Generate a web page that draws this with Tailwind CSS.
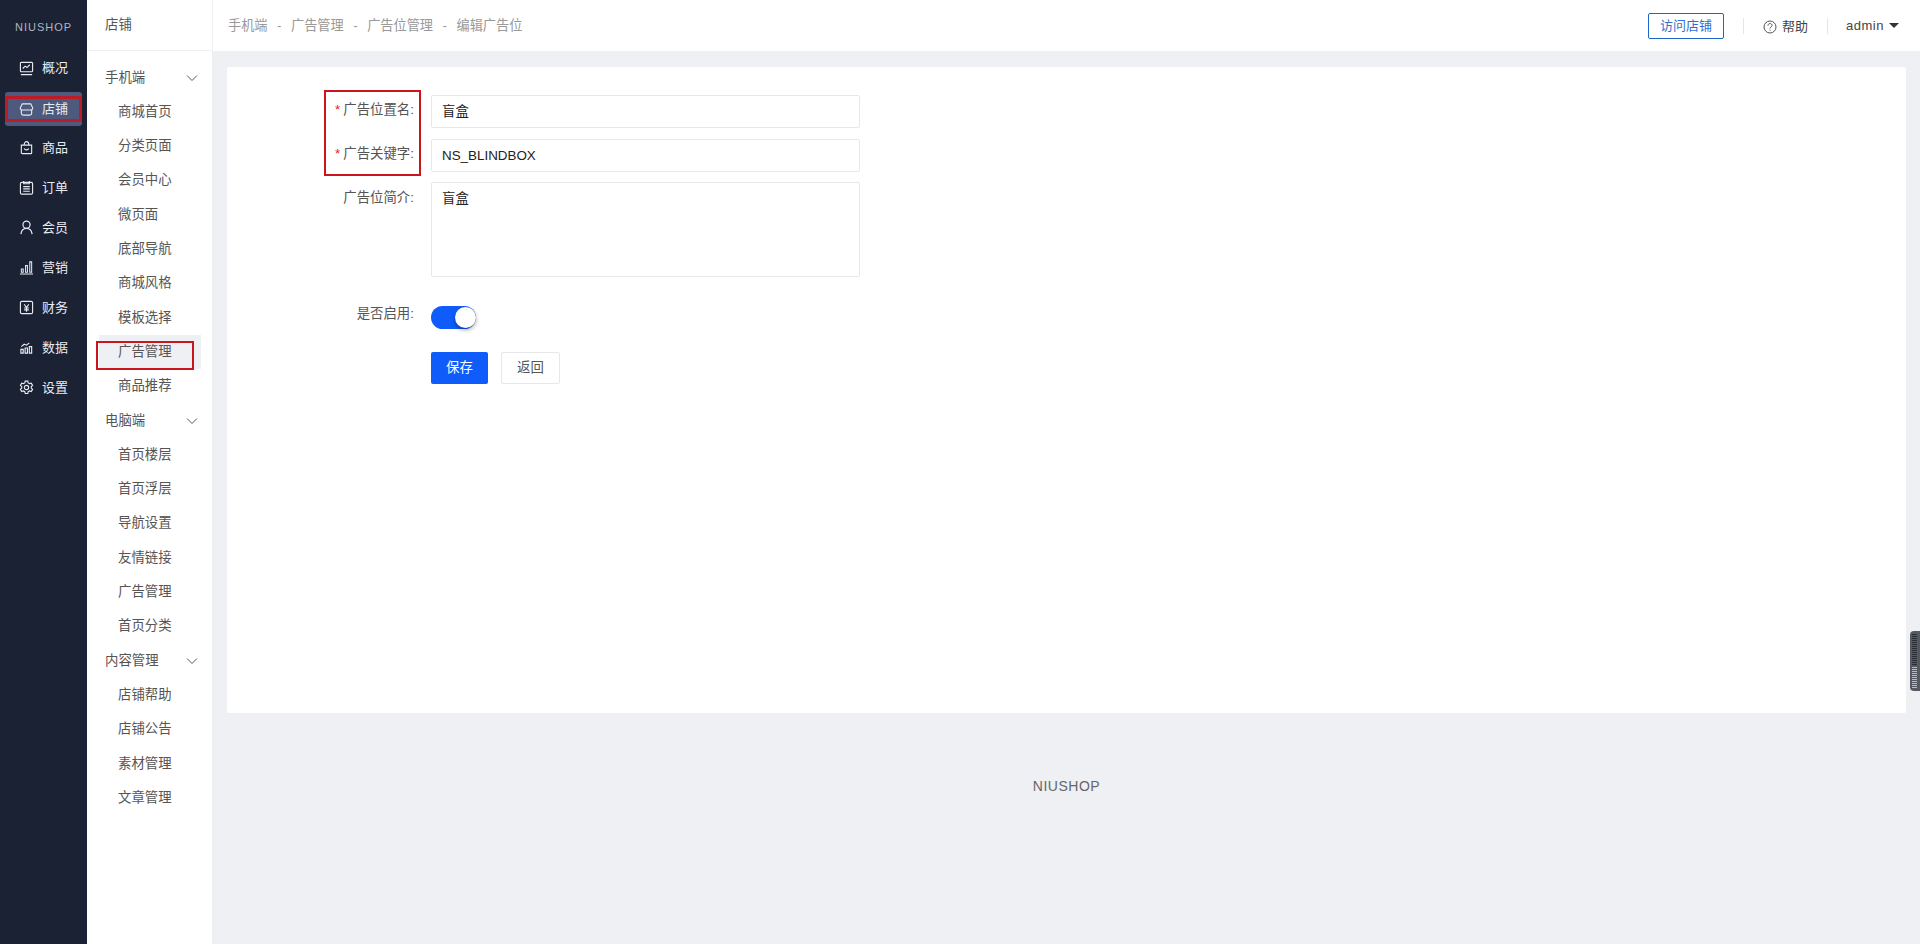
<!DOCTYPE html>
<html lang="zh">
<head>
<meta charset="UTF-8" />
<title>编辑广告位</title>
<script src="https://cdn.jsdelivr.net/npm/@tailwindcss/browser@4"></script>
</head>
<body class="font-['Liberation_Sans','Noto_Sans_CJK_SC',sans-serif] text-[13.4px] text-[#333] bg-[#eff0f4] overflow-hidden">
<div class="flex h-[944px] relative">

  <!-- main nav -->
  <div class="w-[87px] shrink-0 bg-[#1a2233] text-[#e8ebf2] text-[13px] flex flex-col">
    <div class="h-[48px] pt-[7px] flex items-center justify-center text-[11px] tracking-[1px] text-[#b0b5c0]">NIUSHOP</div>
    <div class="flex flex-col px-[5px]">
      <div class="h-[40px] flex items-center justify-center gap-[8px]">
        <svg class="w-[15px] h-[15px]" viewBox="0 0 16 16" fill="none" stroke="currentColor" stroke-width="1.2"><rect x="1.5" y="1.5" width="13" height="10" rx="1"/><path d="M4 8l2.500-2.500 2 1.500 3-3M2 14.500h12"/></svg>
        <span>概况</span>
      </div>
      <div class="h-[34px] mt-[4px] mb-[2px] flex items-center justify-center gap-[8px] bg-[#4e5a7d] rounded-[3px]">
        <svg class="w-[15px] h-[15px]" viewBox="0 0 16 16" fill="none" stroke="currentColor" stroke-width="1.2"><path d="M3.500 2h9l2.200 4.500a2 2 0 01-2 2H3.300a2 2 0 01-2-2zM2.500 8.500v3.500a2 2 0 002 2h7a2 2 0 002-2V8.500"/></svg>
        <span>店铺</span>
      </div>
      <div class="h-[39.9px] flex items-center justify-center gap-[8px]">
        <svg class="w-[15px] h-[15px]" viewBox="0 0 16 16" fill="none" stroke="currentColor" stroke-width="1.2"><path d="M2.500 5.500h11v8a1 1 0 01-1 1h-9a1 1 0 01-1-1zM5.500 5.500c0-5 5-5 5 0M5.500 9c1 2 4 2 5 0"/></svg>
        <span>商品</span>
      </div>
      <div class="h-[39.9px] flex items-center justify-center gap-[8px]">
        <svg class="w-[15px] h-[15px]" viewBox="0 0 16 16" fill="none" stroke="currentColor" stroke-width="1.2"><rect x="1.500" y="2.500" width="13" height="12.500" rx="1.500"/><path d="M5 1v3h6V1M4.500 7h7M4.500 9.500h7M4.500 12h7"/></svg>
        <span>订单</span>
      </div>
      <div class="h-[39.9px] flex items-center justify-center gap-[8px]">
        <svg class="w-[15px] h-[15px]" viewBox="0 0 16 16" fill="none" stroke="currentColor" stroke-width="1.300"><circle cx="8" cy="5" r="3.800"/><path d="M2 15c.6-4 3-6 6-6s5.400 2 6 6"/></svg>
        <span>会员</span>
      </div>
      <div class="h-[39.9px] flex items-center justify-center gap-[8px]">
        <svg class="w-[15px] h-[15px]" viewBox="0 0 16 16" fill="none" stroke="currentColor" stroke-width="1.100"><path d="M1 15h14M2.500 9.500h2v3.500h-2zM7 6h2v7H7zM11.500 2h2v11h-2z"/></svg>
        <span>营销</span>
      </div>
      <div class="h-[39.9px] flex items-center justify-center gap-[8px]">
        <svg class="w-[15px] h-[15px]" viewBox="0 0 16 16" fill="none" stroke="currentColor" stroke-width="1.200"><rect x="1.500" y="1.500" width="13" height="13" rx="1.500"/><path d="M5.500 4.500L8 8l2.500-3.500M5.500 8.500h5M5.500 10.500h5M8 8v4.500"/></svg>
        <span>财务</span>
      </div>
      <div class="h-[39.9px] flex items-center justify-center gap-[8px]">
        <svg class="w-[15px] h-[15px]" viewBox="0 0 16 16" fill="none" stroke="currentColor" stroke-width="1.200"><path d="M2 14v-4h2.500v4zM6.500 14V8.500H9V14zM11 14V7h2.500v7zM2.500 7l3-2.500 2.500 1 3-2.500"/></svg>
        <span>数据</span>
      </div>
      <div class="h-[39.9px] flex items-center justify-center gap-[8px]">
        <svg class="w-[15px] h-[15px]" viewBox="0 0 16 16" fill="none" stroke="currentColor" stroke-width="1.200"><circle cx="8" cy="8" r="2.300"/><path d="M6.600 1.200h2.800l.4 1.900 1.400.8 1.900-.6 1.400 2.400-1.400 1.300v1.600l1.400 1.300-1.400 2.400-1.900-.6-1.400.8-.4 1.900H6.600l-.4-1.900-1.400-.8-1.900.6-1.400-2.400 1.400-1.300V7L1.500 5.700l1.400-2.400 1.900.6 1.400-.8z"/></svg>
        <span>设置</span>
      </div>
    </div>
  </div>

  <!-- sub nav -->
  <div class="w-[126px] shrink-0 bg-white border-r border-[#eeeff3] flex flex-col text-[#555]">
    <div class="h-[51px] pl-[18px] flex items-center border-b border-[#eeeff3]">店铺</div>
    <div class="flex flex-col pt-[9.500px]">
      <div class="h-[34.300px] pl-[18px] pr-[14px] flex items-center justify-between">手机端<svg class="w-[12px] h-[12px]" viewBox="0 0 12 12" fill="none" stroke="#555" stroke-width="1"><path d="M1 3.500l5 5 5-5"/></svg></div>
      <div class="h-[34.300px] pl-[31px] flex items-center">商城首页</div>
      <div class="h-[34.300px] pl-[31px] flex items-center">分类页面</div>
      <div class="h-[34.300px] pl-[31px] flex items-center">会员中心</div>
      <div class="h-[34.300px] pl-[31px] flex items-center">微页面</div>
      <div class="h-[34.300px] pl-[31px] flex items-center">底部导航</div>
      <div class="h-[34.300px] pl-[31px] flex items-center">商城风格</div>
      <div class="h-[34.300px] pl-[31px] flex items-center">模板选择</div>
      <div class="h-[34.300px] pl-[19px] ml-[12px] w-[102px] flex items-center bg-[#eff0f4]">广告管理</div>
      <div class="h-[34.300px] pl-[31px] flex items-center">商品推荐</div>
      <div class="h-[34.300px] pl-[18px] pr-[14px] flex items-center justify-between">电脑端<svg class="w-[12px] h-[12px]" viewBox="0 0 12 12" fill="none" stroke="#555" stroke-width="1"><path d="M1 3.500l5 5 5-5"/></svg></div>
      <div class="h-[34.300px] pl-[31px] flex items-center">首页楼层</div>
      <div class="h-[34.300px] pl-[31px] flex items-center">首页浮层</div>
      <div class="h-[34.300px] pl-[31px] flex items-center">导航设置</div>
      <div class="h-[34.300px] pl-[31px] flex items-center">友情链接</div>
      <div class="h-[34.300px] pl-[31px] flex items-center">广告管理</div>
      <div class="h-[34.300px] pl-[31px] flex items-center">首页分类</div>
      <div class="h-[34.300px] pl-[18px] pr-[14px] flex items-center justify-between">内容管理<svg class="w-[12px] h-[12px]" viewBox="0 0 12 12" fill="none" stroke="#555" stroke-width="1"><path d="M1 3.500l5 5 5-5"/></svg></div>
      <div class="h-[34.300px] pl-[31px] flex items-center">店铺帮助</div>
      <div class="h-[34.300px] pl-[31px] flex items-center">店铺公告</div>
      <div class="h-[34.300px] pl-[31px] flex items-center">素材管理</div>
      <div class="h-[34.300px] pl-[31px] flex items-center">文章管理</div>
    </div>
  </div>

  <!-- right side -->
  <div class="flex-1 flex flex-col min-w-0">
    <div class="h-[51px] bg-white flex items-center justify-between pl-[15px] pr-[21px]">
      <div class="flex gap-[9.500px] text-[#999] text-[13.200px]">
        <span>手机端</span><span>-</span><span>广告管理</span><span>-</span><span>广告位管理</span><span>-</span><span>编辑广告位</span>
      </div>
      <div class="flex items-center text-[#444] text-[13px]">
        <div class="w-[76px] h-[26px] border border-[#1f66cc] rounded-[2px] text-[#2f6fd0] flex items-center justify-center">访问店铺</div>
        <div class="w-px h-[16px] bg-[#e5e5e5] ml-[19px]"></div>
        <svg class="w-[14px] h-[14px] ml-[19px] mt-[2px]" viewBox="0 0 14 14" fill="none" stroke="#555" stroke-width="1"><circle cx="7" cy="7" r="6"/><path d="M5 5.500c0-2.600 4-2.600 4 0 0 1.500-2 1.500-2 3M7 9.700v1"/></svg>
        <span class="ml-[5px] mt-[2px]">帮助</span>
        <div class="w-px h-[16px] bg-[#e5e5e5] ml-[19px]"></div>
        <span class="ml-[18px] tracking-[0.5px]">admin</span>
        <span class="ml-[5px] w-0 h-0 border-x-[5px] border-x-transparent border-t-[5px] border-t-[#333]"></span>
      </div>
    </div>

    <div class="ml-[14px] mr-[14px] mt-[16px] bg-white rounded-[2px] h-[646px] pt-[28px] text-[#555]">
      <div class="flex flex-col gap-[10.500px]">
        <div class="flex items-center h-[33px]">
          <label class="w-[204px] pr-[17px] mb-[3px] text-right"><span class="text-[#e02020] mr-[3px]">*</span>广告位置名:</label>
          <div class="w-[429px] h-[33px] border border-[#e8e8e8] rounded-[2px] flex items-center pl-[10px] pt-[2px] text-[#222]">盲盒</div>
        </div>
        <div class="flex items-center h-[33px]">
          <label class="w-[204px] pr-[17px] mb-[2px] text-right"><span class="text-[#e02020] mr-[3px]">*</span>广告关键字:</label>
          <div class="w-[429px] h-[33px] border border-[#e8e8e8] rounded-[2px] flex items-center pl-[10px] pt-[2px] text-[#222]">NS_BLINDBOX</div>
        </div>
        <div class="flex items-start">
          <label class="w-[204px] pr-[17px] text-right mt-[6px]">广告位简介:</label>
          <div class="w-[429px] h-[95px] border border-[#e8e8e8] rounded-[2px] pl-[10px] pt-[6px] text-[#222]">盲盒</div>
        </div>
      </div>
      <div class="flex items-start mt-[27px]">
        <label class="w-[204px] pr-[17px] text-right">是否启用:</label>
        <div class="w-[45px] h-[23px] mt-[2px] rounded-full bg-[#105cfb] relative">
          <div class="absolute right-0 top-px w-[21px] h-[21px] rounded-full bg-white shadow-[0_2px_4px_rgba(0,0,0,0.35)]"></div>
        </div>
      </div>
      <div class="flex mt-[23px] pl-[204px] gap-[13px]">
        <div class="w-[57px] h-[32px] bg-[#105cfb] text-white rounded-[2px] flex items-center justify-center">保存</div>
        <div class="w-[59px] h-[32px] border border-[#e8e8e8] rounded-[2px] flex items-center justify-center">返回</div>
      </div>
    </div>

    <div class="mt-[63px] flex justify-center text-[14px] tracking-[0.5px] text-[#666]">NIUSHOP</div>
  </div>

  <!-- annotation boxes over the screenshot -->
  <div class="absolute left-[5px] top-[96px] w-[77px] h-[26px] border-[3px] border-[#c9151e]/90"></div>
  <div class="absolute left-[96px] top-[341px] w-[98px] h-[29px] border-[2px] border-[#c9151e]"></div>
  <div class="absolute left-[324px] top-[90px] w-[97px] h-[86px] border-[2px] border-[#c9151e]"></div>

  <!-- side widget -->
  <div class="absolute right-0 top-[631px] w-[10px] h-[60px] bg-[#555a62] rounded-l-[4px] flex flex-col gap-px pl-[2px] pt-[3px]">
    <div class="w-[5px] h-[32px] bg-[repeating-linear-gradient(#2a2e35_0_1px,#555a62_1px_2px)]"></div>
    <div class="w-[5px] h-[21px] bg-[repeating-linear-gradient(#8fdc8a_0_1px,#555a62_1px_2px)]"></div>
  </div>
</div>
</body>
</html>
